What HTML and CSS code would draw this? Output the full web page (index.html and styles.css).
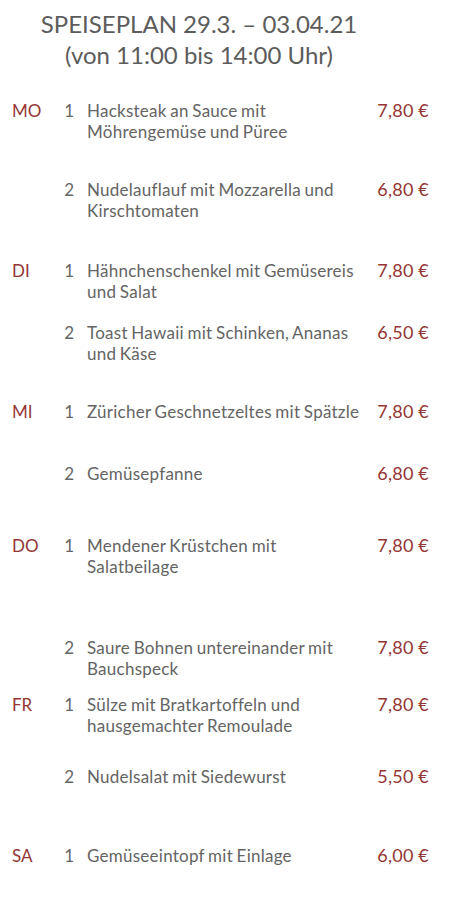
FILE: index.html
```html
<!DOCTYPE html>
<html lang="de">
<head>
<meta charset="utf-8">
<title>Speiseplan</title>
<link rel="stylesheet" href="styles.css">
</head>
<body>
<main class="page">
  <header class="title">
    <div>SPEISEPLAN 29.3. – 03.04.21</div>
    <div>(von 11:00 bis 14:00 Uhr)</div>
  </header>
  <section class="menu">
    <div class="row h79"><span class="day">MO</span><span class="num">1</span><span class="dish">Hacksteak an Sauce mit<br>Möhrengemüse und Püree</span><span class="price">7,80 €</span></div>
    <div class="row h81"><span class="day"></span><span class="num">2</span><span class="dish">Nudelauflauf mit Mozzarella und<br>Kirschtomaten</span><span class="price">6,80 €</span></div>
    <div class="row h62"><span class="day">DI</span><span class="num">1</span><span class="dish">Hähnchenschenkel mit Gemüsereis<br>und Salat</span><span class="price">7,80 €</span></div>
    <div class="row h79"><span class="day"></span><span class="num">2</span><span class="dish">Toast Hawaii mit Schinken, Ananas<br>und Käse</span><span class="price">6,50 €</span></div>
    <div class="row h62"><span class="day">MI</span><span class="num">1</span><span class="dish">Züricher Geschnetzeltes mit Spätzle</span><span class="price">7,80 €</span></div>
    <div class="row h72"><span class="day"></span><span class="num">2</span><span class="dish">Gemüsepfanne</span><span class="price">6,80 €</span></div>
    <div class="row h102"><span class="day">DO</span><span class="num">1</span><span class="dish">Mendener Krüstchen mit<br>Salatbeilage</span><span class="price">7,80 €</span></div>
    <div class="row h57"><span class="day"></span><span class="num">2</span><span class="dish">Saure Bohnen untereinander mit<br>Bauchspeck</span><span class="price">7,80 €</span></div>
    <div class="row h72"><span class="day">FR</span><span class="num">1</span><span class="dish">Sülze mit Bratkartoffeln und<br>hausgemachter Remoulade</span><span class="price">7,80 €</span></div>
    <div class="row h79"><span class="day"></span><span class="num">2</span><span class="dish">Nudelsalat mit Siedewurst</span><span class="price">5,50 €</span></div>
    <div class="row"><span class="day">SA</span><span class="num">1</span><span class="dish">Gemüseeintopf mit Einlage</span><span class="price">6,00 €</span></div>
  </section>
</main>
</body>
</html>
```
FILE: styles.css
```css
html, body {
  margin: 0;
  padding: 0;
  background: #ffffff;
}

body {
  font-family: "Lato", "Liberation Sans", sans-serif;
  color: #595959;
}

.page {
  width: 458px;
  height: 900px;
  overflow: hidden;
  box-sizing: border-box;
  padding: 8px 29px 0 12px;
}

.title {
  width: 374px;
  text-align: center;
  font-size: 24px;
  line-height: 31px;
  color: #5c5c5c;
}

.menu {
  margin-top: 30px;
}

.row {
  display: grid;
  grid-template-columns: 50px 12px 1fr auto;
  align-items: baseline;
  box-sizing: border-box;
}

.h57 { height: 57px; }
.h62 { height: 62px; }
.h72 { height: 72px; }
.h79 { height: 79px; }
.h81 { height: 81px; }
.h102 { height: 102px; }

.day {
  font-size: 17px;
  line-height: 21px;
  color: #943634;
}

.num {
  font-size: 17px;
  line-height: 21px;
  text-align: right;
  color: #666666;
}

.dish {
  margin-left: 13px;
  font-size: 17px;
  line-height: 21px;
  letter-spacing: 0.25px;
  word-spacing: -1px;
  white-space: nowrap;
  color: #646464;
}

.price {
  font-size: 18px;
  line-height: 21px;
  letter-spacing: 0.2px;
  white-space: nowrap;
  color: #943634;
  text-align: right;
}
```
